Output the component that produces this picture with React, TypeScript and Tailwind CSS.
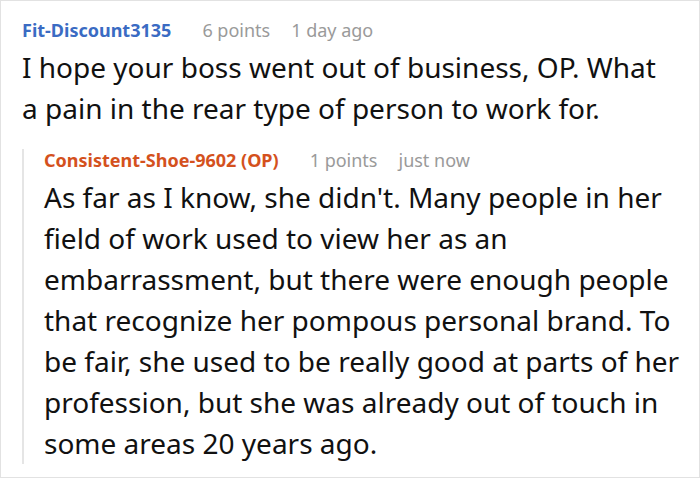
const font = { fontFamily: '"Noto Sans", "Open Sans", sans-serif' };

function Meta({ name, color, points, time }: { name: string; color: string; points: string; time: string }) {
    return (
        <div className="flex items-baseline text-[18px] leading-[22px]">
            <span className={`font-bold ${color}`}>{name}</span>
            <span className="ml-[31px] text-[#9a9a9a]">{points}</span>
            <span className="ml-[21px] text-[#9a9a9a]">{time}</span>
        </div>
    );
}

export default function App() {
    return (
        <div className="h-[478px] w-[700px] border border-[#e2e2e2] bg-white text-[#111]" style={font}>
            <div className="pl-[21px] pr-[26px] pt-[18px]">
                <Meta name="Fit-Discount3135" color="text-[#3a6bc3]" points="6 points" time="1 day ago" />
                <p className="mt-[6px] text-[28px] leading-[41px]">
                    I hope your boss went out of business, OP. What a pain in the rear type of person to work for.
                </p>
            </div>

            <div className="ml-[21px] mt-[20px] border-l-2 border-[#e5e5e5] pl-[20px] pr-4">
                <Meta name="Consistent-Shoe-9602 (OP)" color="text-[#d4511d]" points="1 points" time="just now" />
                <p className="mt-[6px] text-[28px] leading-[41px]">
                    As far as I know, she didn't. Many people in her field of work used to view her as an embarrassment, but there were enough people that recognize her pompous personal brand. To be fair, she used to be really good at parts of her profession, but she was already out of touch in some areas 20 years ago.
                </p>
            </div>
        </div>
    );
}
